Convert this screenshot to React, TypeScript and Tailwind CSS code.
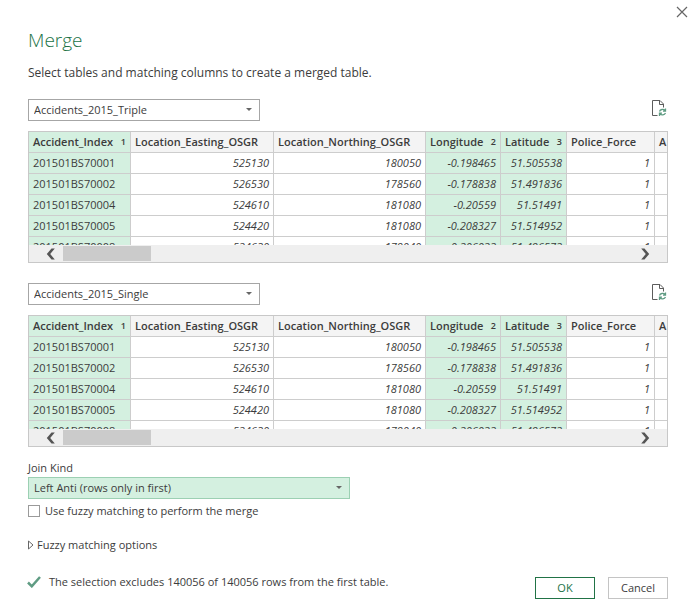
import { useState } from "react";

type Column = { name: string; width: string; rank?: number };

const columns: Column[] = [
  { name: "Accident_Index", width: "w-[102px]", rank: 1 },
  { name: "Location_Easting_OSGR", width: "w-[143px]" },
  { name: "Location_Northing_OSGR", width: "w-[152px]" },
  { name: "Longitude", width: "w-[75px]", rank: 2 },
  { name: "Latitude", width: "w-[66px]", rank: 3 },
  { name: "Police_Force", width: "w-[88px]" },
  { name: "A", width: "w-auto" },
];

const rows: string[][] = [
  ["201501BS70001", "525130", "180050", "-0.198465", "51.505538", "1", ""],
  ["201501BS70002", "526530", "178560", "-0.178838", "51.491836", "1", ""],
  ["201501BS70004", "524610", "181080", "-0.20559", "51.51491", "1", ""],
  ["201501BS70005", "524420", "181080", "-0.208327", "51.514952", "1", ""],
  ["201501BS70008", "524630", "179040", "-0.206022", "51.496572", "1", ""],
];

function Caret() {
  return (
    <svg
      className="pointer-events-none absolute top-[7px] right-[7px] h-2 w-2"
      viewBox="0 0 8 8"
      aria-hidden="true"
    >
      <path d="M1 2h6L4 5z" fill="#666" />
    </svg>
  );
}

function RefreshPageIcon() {
  return (
    <svg width="16" height="18" viewBox="1 0 16 18" fill="none" aria-hidden="true">
      <path d="M6.500 16.500H1.500V1.500H9L12.500 5V8.500" stroke="#5c5c5c" />
      <path d="M8.500 1.500V5.500H12.500" stroke="#5c5c5c" />
      <path d="M8.500 12.500C9.200 10.200 12.500 9.800 14 11.500M14.500 9.500V12.200H12" stroke="#5f9c83" strokeWidth="1.300" />
      <path d="M14.500 14C13.500 16.200 10.500 16.500 9 15M8.500 17V14.200H11" stroke="#5f9c83" strokeWidth="1.300" />
    </svg>
  );
}

function PreviewTable({ label }: { label: string }) {
  return (
    <div className="mt-[10px] border border-[#c8c8c8]">
      <div className="h-[113px] overflow-hidden">
        <table className="w-full table-fixed border-separate border-spacing-0" aria-label={label}>
          <thead>
            <tr>
              {columns.map((c) => (
                <th
                  key={c.name}
                  scope="col"
                  className={`${c.width} h-[21px] overflow-hidden border-r border-b border-[#cdcdcd] p-0 pr-1 pl-1 text-left leading-5 font-semibold whitespace-nowrap last:border-r-0 last:pr-0 ${
                    c.rank ? "bg-[#d4f0e0]" : "bg-[#f4f4f4]"
                  }`}
                >
                  <span className="flex items-center justify-between">
                    {c.name}
                    {c.rank && <span className="text-[9px]">{c.rank}</span>}
                  </span>
                </th>
              ))}
            </tr>
          </thead>
          <tbody>
            {rows.map((r) => (
              <tr key={r[0]}>
                {r.map((v, i) => (
                  <td
                    key={columns[i].name}
                    className={`h-[21px] border-r border-b border-[#cdcdcd] p-0 pr-1 pl-1 leading-5 last:border-r-0 ${
                      i === 0 ? "text-left" : "text-right italic"
                    } ${columns[i].rank ? "bg-[#d4f0e0]" : "bg-white"}`}
                  >
                    {v}
                  </td>
                ))}
              </tr>
            ))}
          </tbody>
        </table>
      </div>
      <div className="flex h-[17px] items-center bg-[#efefef] pr-4 pl-4">
        <button type="button" aria-label="Scroll left" className="flex w-[18px]">
          <svg width="12" height="12" viewBox="0 0 12 12" aria-hidden="true">
            <path d="M6.500 0.500H9.800L5.200 6L9.800 11.500H6.500L1.800 6Z" fill="#555" />
          </svg>
        </button>
        <div className="h-[15px] w-[88px] bg-[#cbcbcb]" />
        <button type="button" aria-label="Scroll right" className="ml-auto flex">
          <svg width="12" height="12" viewBox="0 0 12 12" aria-hidden="true">
            <path d="M5.500 0.500H2.200L6.800 6L2.200 11.500H5.500L10.200 6Z" fill="#555" />
          </svg>
        </button>
      </div>
    </div>
  );
}

function TableSource({ id, name, label }: { id: string; name: string; label: string }) {
  return (
    <section>
      <div className="flex items-start justify-between">
        <div className="relative w-[232px]">
          <select
            id={id}
            aria-label={label}
            className="block h-[22px] w-full appearance-none border border-[#a6a6a6] bg-white pr-5 pl-[5px]"
          >
            <option>{name}</option>
          </select>
          <Caret />
        </div>
        <button type="button" aria-label={`Refresh ${label}`} className="flex">
          <RefreshPageIcon />
        </button>
      </div>
      <PreviewTable label={label} />
    </section>
  );
}

export default function App() {
  const [fuzzy, setFuzzy] = useState(false);
  return (
    <main className="bg-white pr-[21px] pb-4 pl-7 font-['Open_Sans',sans-serif] text-[11px] leading-4 text-[#3c3c3c]">
      <div className="-mr-5 flex h-7 justify-end pt-[6px]">
        <button type="button" aria-label="Close" className="h-3 w-3">
          <svg width="12" height="12" viewBox="0 0 12 12" fill="none" aria-hidden="true">
            <path d="M1 1L11 11M11 1L1 11" stroke="#666" strokeWidth="1.200" />
          </svg>
        </button>
      </div>
      <h1 className="text-[19px] leading-6 font-light text-[#217346]">Merge</h1>
      <p className="mt-[11px] mb-4 text-[12px] leading-5">
        Select tables and matching columns to create a merged table.
      </p>
      <div className="flex flex-col gap-5">
        <TableSource id="first" name="Accidents_2015_Triple" label="First table" />
        <TableSource id="second" name="Accidents_2015_Single" label="Second table" />
      </div>
      <label htmlFor="join" className="mt-3 block leading-[18px]">
        Join Kind
      </label>
      <div className="relative w-[322px]">
        <select
          id="join"
          className="block h-[22px] w-full appearance-none border border-[#9cd0b3] bg-[#d4f0e0] pr-5 pl-[5px]"
        >
          <option>Left Anti (rows only in first)</option>
        </select>
        <Caret />
      </div>
      <label className="mt-1 flex items-center gap-[5px]">
        <input
          type="checkbox"
          checked={fuzzy}
          onChange={(e) => setFuzzy(e.target.checked)}
          className="h-3 w-3 appearance-none border border-[#9a9a9a] bg-white checked:bg-[#217346]"
        />
        Use fuzzy matching to perform the merge
      </label>
      <button type="button" className="mt-[18px] flex items-center gap-[3px]">
        <svg width="6" height="10" viewBox="0 0 6 10" fill="none" aria-hidden="true">
          <path d="M0.500 1L5 5L0.500 9Z" stroke="#666" />
        </svg>
        Fuzzy matching options
      </button>
      <div className="mt-[21px] flex items-start justify-between">
        <p className="-ml-px flex items-center gap-2 whitespace-nowrap">
          <svg width="14" height="12" viewBox="0 0 14 12" fill="none" aria-hidden="true">
            <path d="M1 6.500L4.800 10.300L13 1" stroke="#5f9c83" strokeWidth="2.500" />
          </svg>
          The selection excludes 140056 of 140056 rows from the first table.
        </p>
        <div className="mt-[3px] flex gap-[13px]">
          <button type="button" className="h-[22px] w-[60px] border border-[#217346] text-[#217346]">
            OK
          </button>
          <button type="button" className="h-[22px] w-[60px] border border-[#c4c4c4]">
            Cancel
          </button>
        </div>
      </div>
    </main>
  );
}
